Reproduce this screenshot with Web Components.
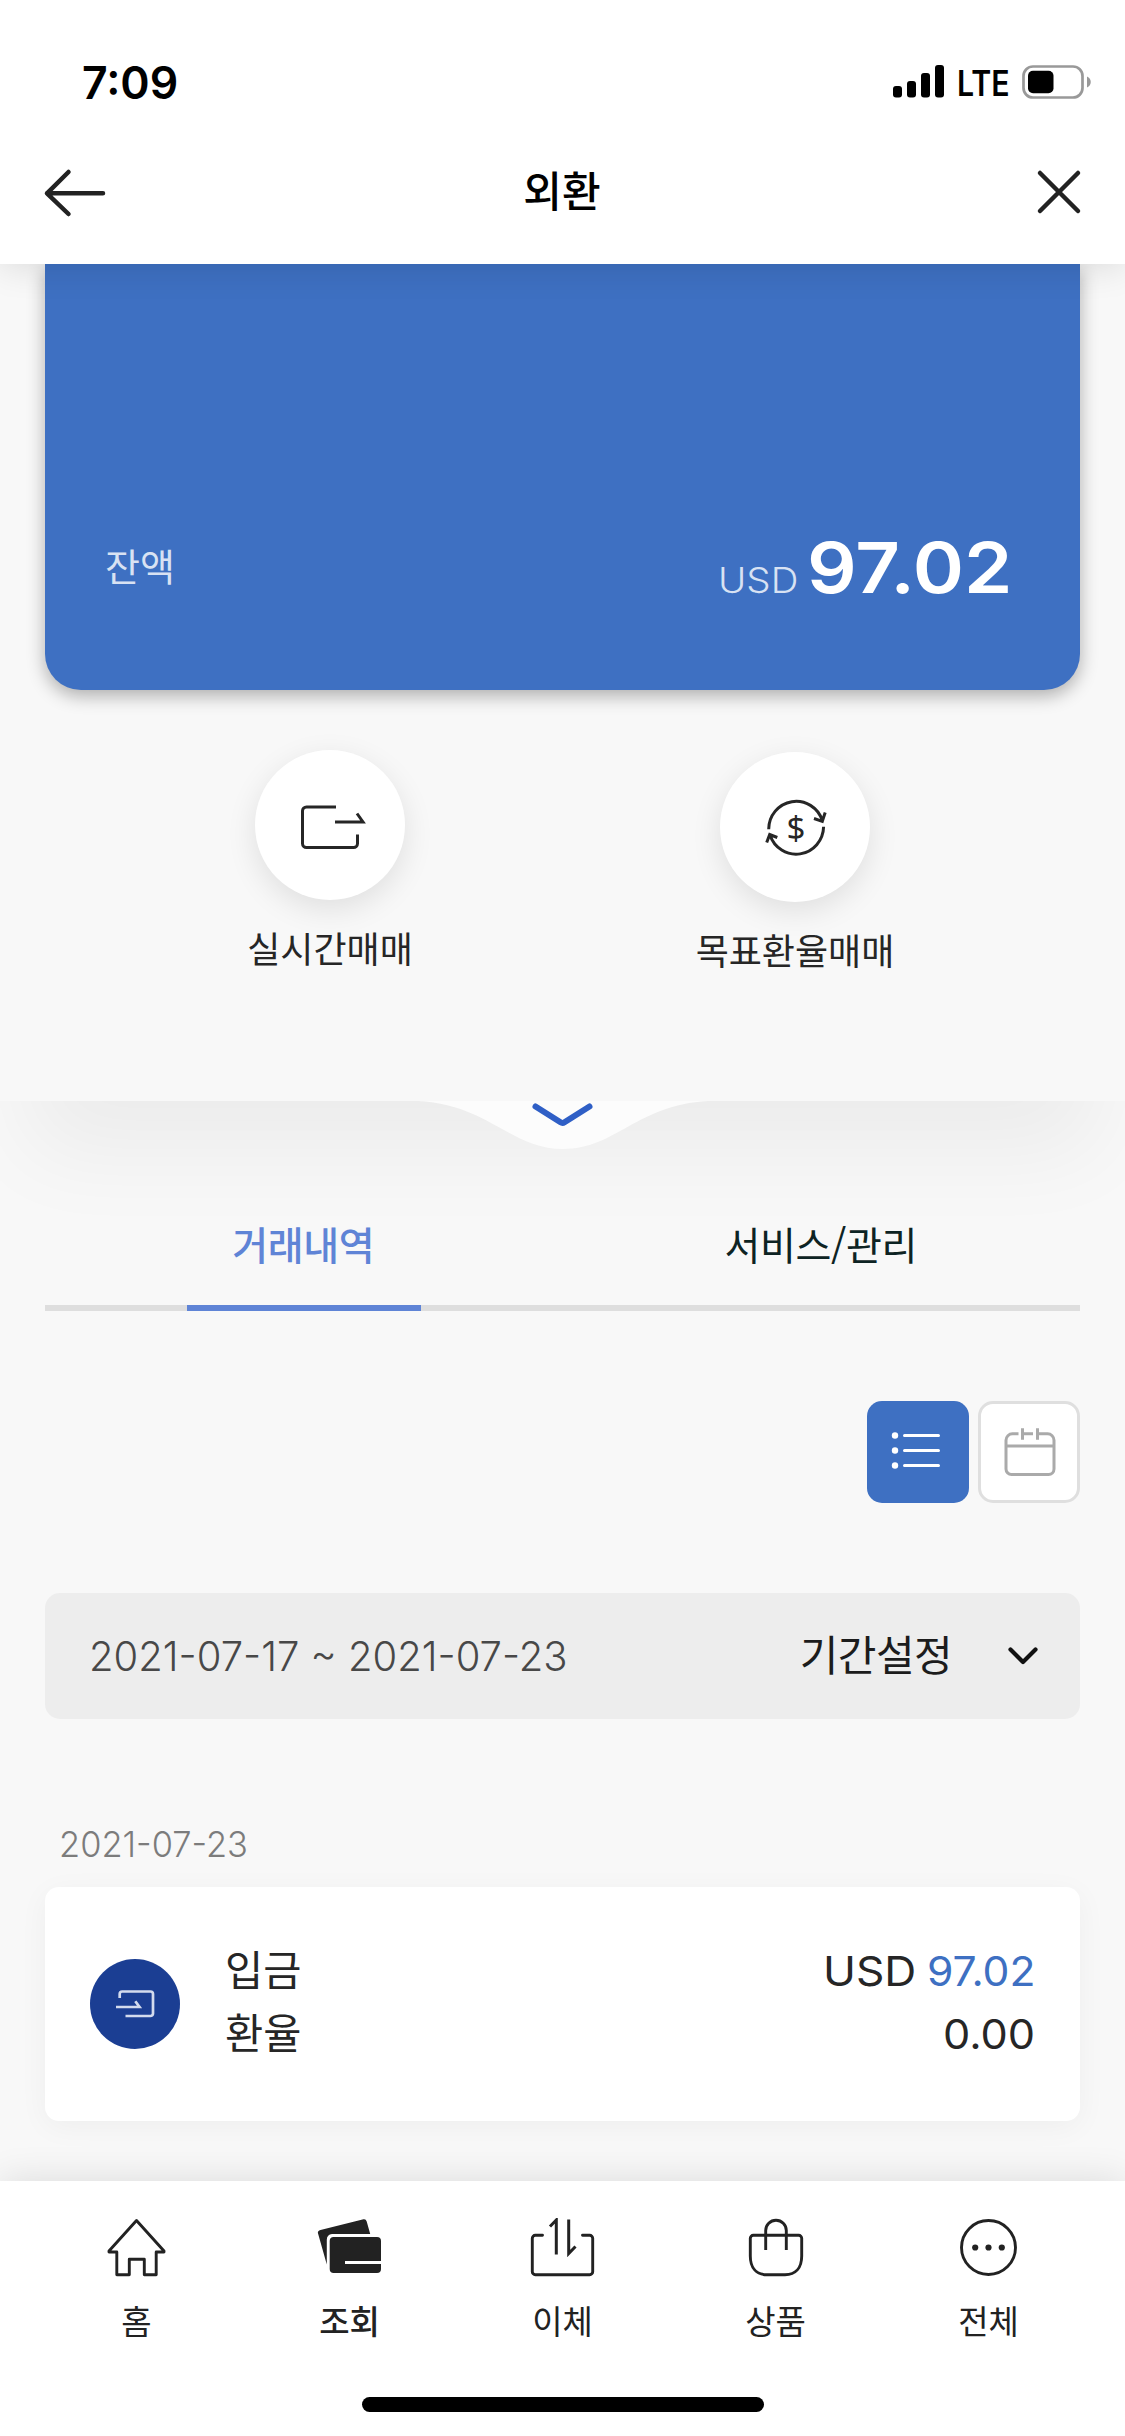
<!DOCTYPE html>
<html lang="ko">
<head>
<meta charset="utf-8">
<title>외환</title>
<style>
  body { margin: 0; width: 1125px; height: 2436px; overflow: hidden; background: #f8f8f8; }
</style>
</head>
<body>
<fx-app></fx-app>

<script>
const KR = '"Noto Sans CJK KR", "Noto Sans", sans-serif';
const define = (name, html) => customElements.define(name, class extends HTMLElement {
  connectedCallback() {
    if (this.shadowRoot) return;
    this.attachShadow({ mode: 'open' }).innerHTML = html;
  }
});

/* Latin text with horizontal proportion: --w box width, --s stretch, --l left bearing */
define('wide-text', `
  <style>
    :host { display: inline-block; width: var(--w); white-space: nowrap; font-family: Inter, sans-serif; line-height: 1; flex: none; }
    span { display: inline-block; transform-origin: 0 50%; transform: scaleX(var(--s, 1)); margin-left: calc(var(--l, 0px) * -1); }
  </style><span><slot></slot></span>`);

define('status-bar', `
  <style>
    :host { display: flex; box-sizing: border-box; height: 132px; padding: 32px 33px 0 83px; align-items: center; justify-content: space-between; color: #000; }
    .time { font-size: 45px; font-weight: 600; --w: 95px; --l: 1px; --s: .99; }
    .right { display: flex; align-items: center; }
    .lte { font-size: 35px; font-weight: 600; --w: 63px; --l: 2px; --s: .865; margin-left: 15px; margin-top: 2px; }
    svg { display: block; }
  </style>
  <wide-text class="time">7:09</wide-text>
  <div class="right">
    <svg width="51" height="34" viewBox="0 0 51 34"><rect x="0" y="21" width="9" height="11.5" rx="3"/><rect x="14" y="16" width="9" height="16.500" rx="3"/><rect x="28" y="8" width="9" height="24.500" rx="3"/><rect x="42" y="0" width="9" height="32.500" rx="3"/></svg>
    <wide-text class="lte">LTE</wide-text>
    <svg width="70" height="34" viewBox="0 0 70 34"><rect x="1.500" y="1.500" width="59" height="31" rx="9.500" fill="none" stroke="#999" stroke-width="2.700"/><rect x="6" y="5.800" width="25.500" height="22.400" rx="5"/><path d="M65 11.500c5 2 5 9 0 11z" fill="#999"/></svg>
  </div>`);

define('app-bar', `
  <style>
    :host { display: grid; grid-template-columns: 61px 1fr 61px; box-sizing: border-box; height: 132px; padding: 0 44px 12px 44px; align-items: center; justify-items: center; font: 500 42px/42px ${KR}; color: #000; }
    svg { display: block; fill: none; stroke: #222; stroke-width: 4.5; stroke-linecap: round; stroke-linejoin: round; overflow: visible; }
    .close { justify-self: end; }
    div { margin: -6px 0 0 -1px; }
  </style>
  <svg width="61" height="46" viewBox="0 0 61 46"><path d="M24.500 3 3 24.300 24.500 45M3 24.300H59"/></svg>
  <div><slot></slot></div>
  <svg class="close" width="44" height="46" viewBox="0 0 44 46"><path d="M3 4 41 42M41 4 3 42"/></svg>`);

define('balance-card', `
  <style>
    :host { display: flex; box-sizing: border-box; height: 426px; padding: 269px 71px 0 60px; align-items: flex-start; justify-content: space-between; background: #3e70c2; border-radius: 0 0 36px 36px; box-shadow: 0 6px 18px rgba(0,0,0,.3); color: #fff; }
    .label { font: 400 38px/70px ${KR}; color: #d8e2f3; margin-top: -3px; }
    .amount { display: flex; align-items: baseline; gap: 11px; }
    .cur { font-size: 35px; font-weight: 300; color: #d8e2f3; --w: 78px; --l: 2px; --s: 1.1; }
    .num { font-size: 70px; font-weight: 560; --w: 200px; --l: 2px; --s: 1.11; }
  </style>
  <div class="label">잔액</div>
  <div class="amount"><wide-text class="cur">USD</wide-text><wide-text class="num">97.02</wide-text></div>`);

define('round-action', `
  <style>
    :host { display: flex; flex-direction: column; align-items: center; gap: 29px; font: 400 36px/36px ${KR}; color: #262626; white-space: nowrap; }
    .disc { width: 150px; height: 150px; border-radius: 50%; background: #fff; box-shadow: 0 9px 30px rgba(0,0,0,.1); }
  </style>
  <div class="disc"><slot name="icon"></slot></div>
  <slot></slot>`);

define('pull-notch', `
  <style>:host { display: flex; justify-content: center; height: 48px; } svg { display: block; }</style>
  <svg width="290" height="48" viewBox="0 0 290 48">
    <path d="M0 0C72 4 92 48 145 48S218 4 290 0Z" fill="#fcfcfc"/>
    <path d="M117.500 5.500 142.500 21.300q2 1.300 4 0L171.500 5.500" fill="none" stroke="#2f5fc6" stroke-width="6" stroke-linecap="round"/>
  </svg>`);

define('tab-strip', `
  <style>
    :host { display: grid; grid-template-columns: 1fr 1fr; height: 156px; margin: 0 45px; border-bottom: 6px solid #dedede; }
  </style><slot></slot>`);

define('tab-item', `
  <style>
    :host { display: flex; flex-direction: column; align-items: center; font: 400 39px/39px ${KR}; color: #0d2323; letter-spacing: -.4px; }
    :host([active]) { font-weight: 500; color: #5f84d6; }
    div { margin: 75px 1px 0 0; }
    i { display: none; width: 234px; height: 6px; margin-top: auto; margin-bottom: -6px; background: #5f84d6; }
    :host([active]) i { display: block; }
  </style><div><slot></slot></div><i></i>`);

define('view-toggle', `
  <style>
    :host { display: flex; justify-content: flex-end; gap: 9px; margin: 90px 45px 0; }
    div { box-sizing: border-box; width: 102px; height: 102px; border-radius: 15px; }
    .list { background: #3e70c2; }
    .cal { background: #fff; border: 3px solid #dfdfdf; }
    svg { display: block; }
    .cal svg { margin: -3px; }
  </style>
  <div class="list"><svg width="102" height="102" viewBox="0 0 102 102" fill="#fff"><circle cx="28" cy="34.500" r="3.200"/><circle cx="28" cy="49.500" r="3.200"/><circle cx="28" cy="64.500" r="3.200"/><path d="M37.500 34.500H71.500M37.500 49.500H71.500M37.500 64.500H71.500" stroke="#fff" stroke-width="3" stroke-linecap="round"/></svg></div>
  <div class="cal"><svg width="102" height="102" viewBox="0 0 102 102" fill="none" stroke="#aaa" stroke-width="3"><path d="M40.500 32.800H34.500a6.500 6.500 0 0 0-6.500 6.500V68a5.500 5.500 0 0 0 5.500 5.500H70.500a5.500 5.500 0 0 0 5.500-5.500V39.300a6.500 6.500 0 0 0-6.500-6.500H60M28 45H76M44.500 27.300V38.700M59.500 27.300V38.700M44.500 32.800H55"/></svg></div>`);

define('period-bar', `
  <style>
    :host { display: flex; box-sizing: border-box; height: 126px; margin: 90px 45px 0; padding: 0 41px 0 45px; align-items: center; background: #ededed; border-radius: 15px; }
    .range { font-size: 41px; font-weight: 300; color: #484848; --w: 480px; --l: 1px; --s: .976; }
    .set { font: 400 42px/42px ${KR}; letter-spacing: -.6px; color: #1c1c1c; margin: -6px 55px 0 auto; }
  </style>
  <wide-text class="range">2021-07-17 ~ 2021-07-23</wide-text>
  <div class="set">기간설정</div>
  <svg width="32" height="20" viewBox="0 0 32 20"><path d="M3.500 3.500 16 16 28.500 3.500" fill="none" stroke="#111" stroke-width="4.200" stroke-linecap="round" stroke-linejoin="round"/></svg>`);

define('day-group', `
  <style>
    :host { display: block; margin: 108px 45px 0; }
    .day { display: flex; margin: 0 15px 24px; height: 36px; align-items: center; font-size: 35.500px; font-weight: 300; color: #7c7c7c; --w: 190px; --l: 1px; --s: .97; }
  </style>
  <wide-text class="day">2021-07-23</wide-text>
  <slot></slot>`);

define('deposit-row', `
  <style>
    :host { display: flex; box-sizing: border-box; height: 234px; padding: 0 45px; gap: 45px; align-items: center; background: #fff; border-radius: 14px; box-shadow: 0 6px 30px rgba(0,0,0,.045); color: #262626; }
    .names { display: flex; flex-direction: column; font: 400 41.500px/63px ${KR}; margin-top: -9px; }
    .vals { display: flex; flex-direction: column; align-items: flex-end; margin: -3px -1px 0 auto; font-size: 41px; }
    .vals > * { height: 63px; display: flex; align-items: center; }
    .cur { --w: 103px; --l: 3px; --s: 1.08; }
    .sum { --w: 107px; --l: 2px; --s: 1.04; color: #3e70c2; }
    .rate { --w: 91px; --l: 2px; --s: 1.055; }
    wide-text { font-weight: 400; }
    svg { display: block; }
  </style>
  <svg width="90" height="90" viewBox="0 0 90 90"><circle cx="45" cy="45" r="45" fill="#1b3e93"/><path d="M29.700 39V35a2.500 2.500 0 0 1 2.500-2.500H60.500a2.500 2.500 0 0 1 2.500 2.500V54.500a2.500 2.500 0 0 1-2.500 2.500H35.500M26 48H49.500L45.300 42.300" fill="none" stroke="#d3dbee" stroke-width="2.700"/></svg>
  <div class="names"><span>입금</span><span>환율</span></div>
  <div class="vals"><div><wide-text class="cur">USD</wide-text><wide-text class="sum">97.02</wide-text></div><div><wide-text class="rate">0.00</wide-text></div></div>`);

define('nav-item', `
  <style>
    :host { display: flex; flex-direction: column; align-items: center; gap: 25.5px; font: 400 33px/33px ${KR}; color: #222; }
    :host([active]) { font-weight: 500; }
  </style><slot name="icon"></slot><slot></slot>`);

define('bottom-nav', `
  <style>
    :host { display: flex; flex-direction: column; box-sizing: border-box; height: 255px; margin-top: auto; padding-top: 37px; background: #fff; box-shadow: 0 0 36px rgba(0,0,0,.12); position: relative; align-items: center; }
    .items { display: grid; grid-template-columns: repeat(5, 213px); }
    .home { width: 402px; height: 15px; border-radius: 8px; background: #000; margin-top: auto; margin-bottom: 24px; }
    svg { display: block; fill: none; stroke: #222; stroke-width: 2.9; stroke-linejoin: round; stroke-linecap: round; }
  </style>
  <div class="items">
    <nav-item><svg slot="icon" width="70" height="60" viewBox="0.500 0 70 60"><path d="M35 2.500 7.500 33V34H15.300V56.700H27.800V41.300H42.800V56.700H54.700V34H62.500V33Z"/></svg>홈</nav-item>
    <nav-item active><svg slot="icon" width="70" height="60" viewBox="0.500 0 70 60"><g fill="#222" stroke="none"><path d="M6 12 49 1.200q2.500-.4 3.200 2.200L55.700 16H17.500q-5 .6-5.200 5.500V46.500L3.400 15q-.4-2.200 2.600-3Z"/><path d="M19.200 19H62.500a4 4 0 0 1 4 4V43H30.500V46H66.500V51a4 4 0 0 1-4 4H19.200a4 4 0 0 1-4-4V23a4 4 0 0 1 4-4Z"/></g></svg>조회</nav-item>
    <nav-item><svg slot="icon" width="70" height="60" viewBox="0.500 0 70 60"><path d="M15 17.300H7.800a3 3 0 0 0-3 3V53.700a3 3 0 0 0 3 3H62.200a3 3 0 0 0 3-3V20.300a3 3 0 0 0-3-3H55"/><path d="M22.500 8.500 28.800 2V36.500M41.200 1.500V35.500L48 28.500" stroke-linecap="butt" stroke-linejoin="miter" stroke-width="3"/></svg>이체</nav-item>
    <nav-item><svg slot="icon" width="70" height="60" viewBox="0.500 0 70 60"><path d="M12.800 17.300H58.200a3 3 0 0 1 3 3V38C61.200 50 55 56.700 44.500 56.700H26.500C16 56.700 9.800 50 9.800 38V20.300a3 3 0 0 1 3-3Z"/><path d="M25.200 32V12.500a10.300 10.300 0 0 1 20.600 0V32" stroke-linecap="butt"/></svg>상품</nav-item>
    <nav-item><svg slot="icon" width="70" height="60" viewBox="0.500 0 70 60"><circle cx="35" cy="29.500" r="27"/><g fill="#222" stroke="none"><circle cx="21.700" cy="29.500" r="3.100"/><circle cx="35" cy="29.500" r="3.100"/><circle cx="48.300" cy="29.500" r="3.100"/></g></svg>전체</nav-item>
  </div>
  <div class="home"></div>`);

define('fx-app', `
  <style>
    :host { display: flex; flex-direction: column; width: 1125px; height: 2436px; background: #f8f8f8; overflow: hidden; }
    header { background: #fff; box-shadow: 0 0 36px rgba(0,0,0,.14); position: relative; z-index: 2; height: 264px; flex: none; }
    .account { height: 837px; flex: none; box-sizing: border-box; padding: 0 45px; background: #f8f8f8; position: relative; z-index: 1; }
    .actions { display: grid; grid-template-columns: 1fr 1fr; align-items: start; padding: 60px 52.5px 0; }
    .actions round-action + round-action { margin-top: 2px; }
    .actions svg { display: block; fill: none; stroke: #262626; stroke-width: 3; }
    .wrap { position: relative; clip-path: inset(0 0 -200px 0); height: 210px; }
    .wrap::before { content: ""; position: absolute; left: 0; right: 0; top: -300px; height: 300px; box-shadow: 0 80px 90px -28px rgba(0,0,0,.052); }
    .wrap > * { position: relative; }
  </style>
  <header><status-bar></status-bar><app-bar>외환</app-bar></header>
  <section class="account">
    <balance-card></balance-card>
    <div class="actions">
      <round-action><svg slot="icon" width="150" height="150" viewBox="0 0 150 150"><path d="M81 57H51.500a4 4 0 0 0-4 4V93.500a4 4 0 0 0 4 4H98.500a4 4 0 0 0 4-4V84.500M80 72H108L102 63.500"/></svg>실시간매매</round-action>
      <round-action><svg slot="icon" width="150" height="150" viewBox="0 0 150 150"><path d="M48.700 77.300A27.500 28 0 0 1 102.300 68.500M103.600 74.800A27.500 28 0 0 1 50 83M94 66.500 102.300 69.300 105.200 60.500M57.300 85.500 49.700 82.500 46.700 90.500"/><text x="76" y="88.300" text-anchor="middle" font-family="Noto Sans" font-size="33" fill="#262626" stroke="none">$</text></svg>목표환율매매</round-action>
    </div>
  </section>
  <section class="history">
    <div class="wrap">
      <pull-notch></pull-notch>
      <tab-strip><tab-item active>거래내역</tab-item><tab-item>서비스/관리</tab-item></tab-strip>
    </div>
    <view-toggle></view-toggle>
    <period-bar></period-bar>
    <day-group><deposit-row></deposit-row></day-group>
  </section>
  <bottom-nav></bottom-nav>`);
</script>
</body>
</html>
